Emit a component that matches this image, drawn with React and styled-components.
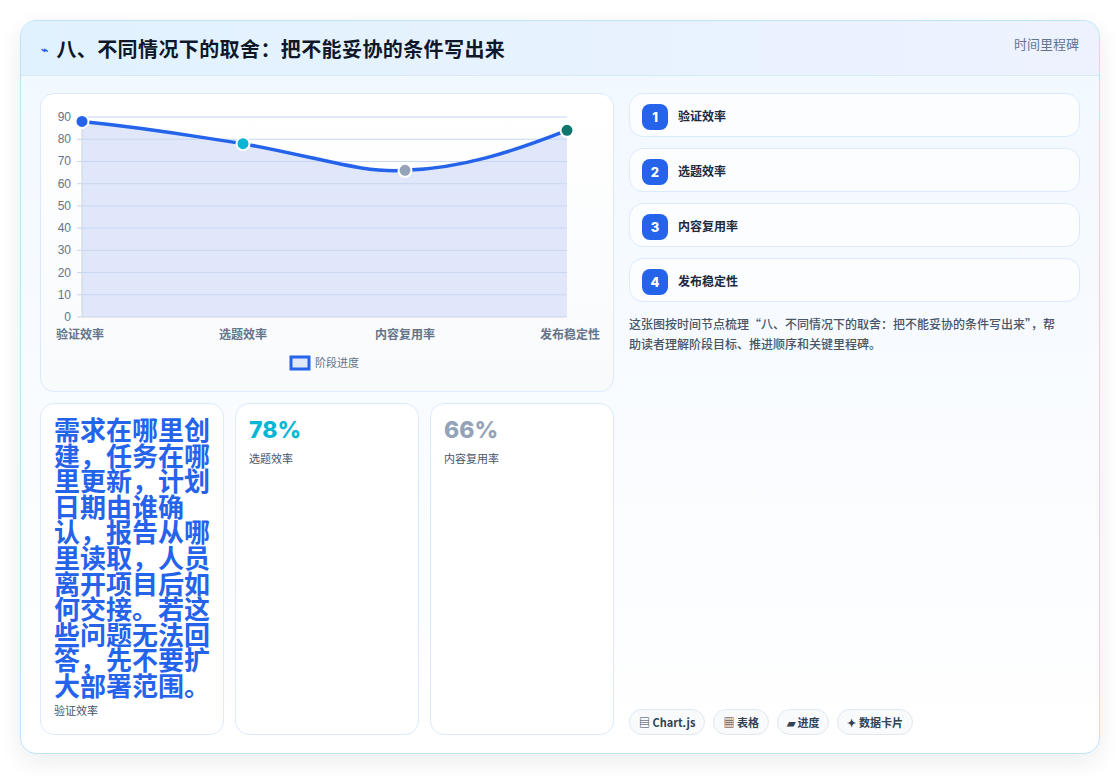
import React from "react";
import styled, { createGlobalStyle } from "styled-components";

const Global = createGlobalStyle`
  html, body { margin: 0; background: #eeeef2; }
  body { font-family: "Noto Sans CJK SC", "Noto Sans", sans-serif; }
`;

const Page = styled.div`
  width: 1120px;
  height: 776px;
  padding: 20px;
  box-sizing: border-box;
  background: #fff;
`;

const Card = styled.div`
  width: 1080px;
  height: 734px;
  box-sizing: border-box;
  border: 1px solid #bfe3fb;
  border-radius: 16px;
  background: linear-gradient(180deg, #f0f8ff 0%, #fafcff 60%, #ffffff 100%);
  box-shadow: 0 8px 24px rgba(15, 23, 42, 0.08);
  overflow: hidden;
  display: flex;
  flex-direction: column;
`;

const Header = styled.div`
  height: 54px;
  flex: none;
  display: flex;
  align-items: center;
  justify-content: space-between;
  padding: 0 20px;
  background: linear-gradient(90deg, #e0f2fe, #eef2ff);
  border-bottom: 1px solid #d6eaf8;
`;

const Title = styled.h1`
  margin: 0;
  font-size: 20px;
  font-weight: 700;
  letter-spacing: 0.4px;
  color: #0f172a;
  display: flex;
  align-items: center;
  gap: 8px;
  span { color: #2563eb; font-size: 12px; }
`;

const HeaderTag = styled.div`
  font-size: 13px;
  color: #64748b;
  align-self: flex-start;
  margin-top: 13px;
`;

const Body = styled.div`
  flex: 1;
  display: grid;
  grid-template-columns: 574px 1fr;
  gap: 15px;
  padding: 17px 19px 18px 19px;
`;

const LeftCol = styled.div`
  display: flex;
  flex-direction: column;
  gap: 11px;
`;

const ChartPanel = styled.div`
  height: 299px;
  border: 1px solid #dbeafe;
  border-radius: 14px;
  background: linear-gradient(180deg, #ffffff, #f8fafc);
  box-sizing: border-box;
  overflow: hidden;
`;

const Stats = styled.div`
  flex: 1;
  display: grid;
  grid-template-columns: repeat(3, 1fr);
  gap: 11px;
`;

const Stat = styled.div`
  border: 1px solid #dbeafe;
  border-radius: 14px;
  background: #fff;
  padding: 12px 13px 12px;
  display: flex;
  flex-direction: column;
`;

const BigText = styled.div`
  font-size: 26px;
  line-height: 25.6px;
  font-weight: 700;
  color: #2563eb;
`;

const Value = styled.div`
  font-family: "Inter", "Noto Sans", sans-serif;
  font-size: 23px;
  font-weight: 800;
  color: ${(p) => p.color};
  line-height: 28px;
`;

const Label = styled.div`
  font-size: 11px;
  color: #475569;
  margin-top: ${(p) => p.$mt || 6}px;
`;

const RightCol = styled.div`
  display: flex;
  flex-direction: column;
`;

const Steps = styled.div`
  display: flex;
  flex-direction: column;
  gap: 11px;
`;

const Step = styled.div`
  height: 44px;
  box-sizing: border-box;
  border: 1px solid #dbeafe;
  border-radius: 14px;
  background: #fbfdff;
  display: flex;
  align-items: center;
  gap: 10px;
  padding: 0 12px;
  font-size: 12px;
  font-weight: 700;
  color: #1e293b;
`;

const Badge = styled.div`
  width: 26px;
  height: 26px;
  border-radius: 8px;
  background: #2563eb;
  color: #fff;
  font-family: "Inter", sans-serif;
  font-weight: 800;
  font-size: 13px;
  display: flex;
  align-items: center;
  justify-content: center;
  margin-top: 3px;
`;

const Note = styled.p`
  margin: 12px 14px 0 0;
  font-size: 12px;
  line-height: 20px;
  font-weight: 500;
  color: #475569;
`;

const Tags = styled.div`
  margin-top: auto;
  display: flex;
  gap: 8px;
`;

const Tag = styled.div`
  height: 26px;
  box-sizing: border-box;
  padding: 0 9px;
  border: 1px solid #e2e8f0;
  border-radius: 13px;
  background: #f8fafc;
  font-size: 11px;
  font-weight: 700;
  color: #334155;
  display: flex;
  align-items: center;
  gap: 3px;
`;

const X = [41, 202, 364, 526];
const vals = [88, 78, 66, 84];
const yOf = (v) => 223 - v * 2.222;
const dotColors = ["#2563eb", "#06b6d4", "#94a3b8", "#0f766e"];
const labels = ["验证效率", "选题效率", "内容复用率", "发布稳定性"];

function Chart() {
  const P = X.map((x, i) => [x, yOf(vals[i])]);
  const line = `M${P[0][0]},${P[0][1]} C120,${P[0][1] + 8} 160,${P[1][1] - 6} ${P[1][0]},${P[1][1]} C280,${P[1][1] + 14} 320,${P[2][1] + 3} ${P[2][0]},${P[2][1]} C420,${P[2][1] - 2} 470,${P[3][1] + 22} ${P[3][0]},${P[3][1]}`;
  return (
    <svg width="574" height="298" viewBox="0 0 574 298" style={{ display: "block" }}>
      <path d={`${line} L526,223 L41,223 Z`} fill="#e0e7fa" />
      {[0, 10, 20, 30, 40, 50, 60, 70, 80, 90].map((v) => (
        <g key={v}>
          <line x1="36" x2="526" y1={yOf(v)} y2={yOf(v)} stroke={v === 0 ? "#cbd5e1" : "#c7d6f0"} strokeWidth="1" />
          <text x="30" y={yOf(v) + 4} textAnchor="end" fontSize="12" fill="#64748b" fontFamily="Liberation Sans, sans-serif">{v}</text>
        </g>
      ))}
      <line x1="41" x2="41" y1={yOf(90)} y2="223" stroke="#cbd5e1" />
      <path d={line} fill="none" stroke="#2563eb" strokeWidth="3.5" />
      {P.map(([x, y], i) => (
        <circle key={i} cx={x} cy={y} r="6.5" fill={dotColors[i]} stroke="#fff" strokeWidth="2" />
      ))}
      {labels.map((l, i) => (
        <text key={l} x={i === 3 ? 559 : i === 0 ? 15 : X[i]} y="245" textAnchor={i === 3 ? "end" : i === 0 ? "start" : "middle"} fontSize="12" fontWeight="600" fill="#64748b" fontFamily="Noto Sans CJK SC, sans-serif">{l}</text>
      ))}
      <rect x="250" y="263" width="18" height="12" fill="#e0e7fa" stroke="#2563eb" strokeWidth="3" />
      <text x="274" y="273" fontSize="11" fill="#64748b" fontFamily="Noto Sans CJK SC, sans-serif">阶段进度</text>
    </svg>
  );
}

export default function App() {
  return (
    <Page>
      <Global />
      <Card>
        <Header>
          <Title><span>⌁</span>八、不同情况下的取舍：把不能妥协的条件写出来</Title>
          <HeaderTag>时间里程碑</HeaderTag>
        </Header>
        <Body>
          <LeftCol>
            <ChartPanel><Chart /></ChartPanel>
            <Stats>
              <Stat>
                <BigText>需求在哪里创建，任务在哪里更新，计划日期由谁确认，报告从哪里读取，人员离开项目后如何交接。若这些问题无法回答，先不要扩大部署范围。</BigText>
                <Label $mt={4}>验证效率</Label>
              </Stat>
              <Stat>
                <Value color="#06b6d4">78%</Value>
                <Label>选题效率</Label>
              </Stat>
              <Stat>
                <Value color="#94a3b8">66%</Value>
                <Label>内容复用率</Label>
              </Stat>
            </Stats>
          </LeftCol>
          <RightCol>
            <Steps>
              {labels.map((l, i) => (
                <Step key={l}><Badge>{i + 1}</Badge>{l}</Step>
              ))}
            </Steps>
            <Note>这张图按时间节点梳理“八、不同情况下的取舍：把不能妥协的条件写出来”，帮助读者理解阶段目标、推进顺序和关键里程碑。</Note>
            <Tags>
              <Tag>▤ Chart.js</Tag>
              <Tag>▦ 表格</Tag>
              <Tag>▰ 进度</Tag>
              <Tag>✦ 数据卡片</Tag>
            </Tags>
          </RightCol>
        </Body>
      </Card>
    </Page>
  );
}
